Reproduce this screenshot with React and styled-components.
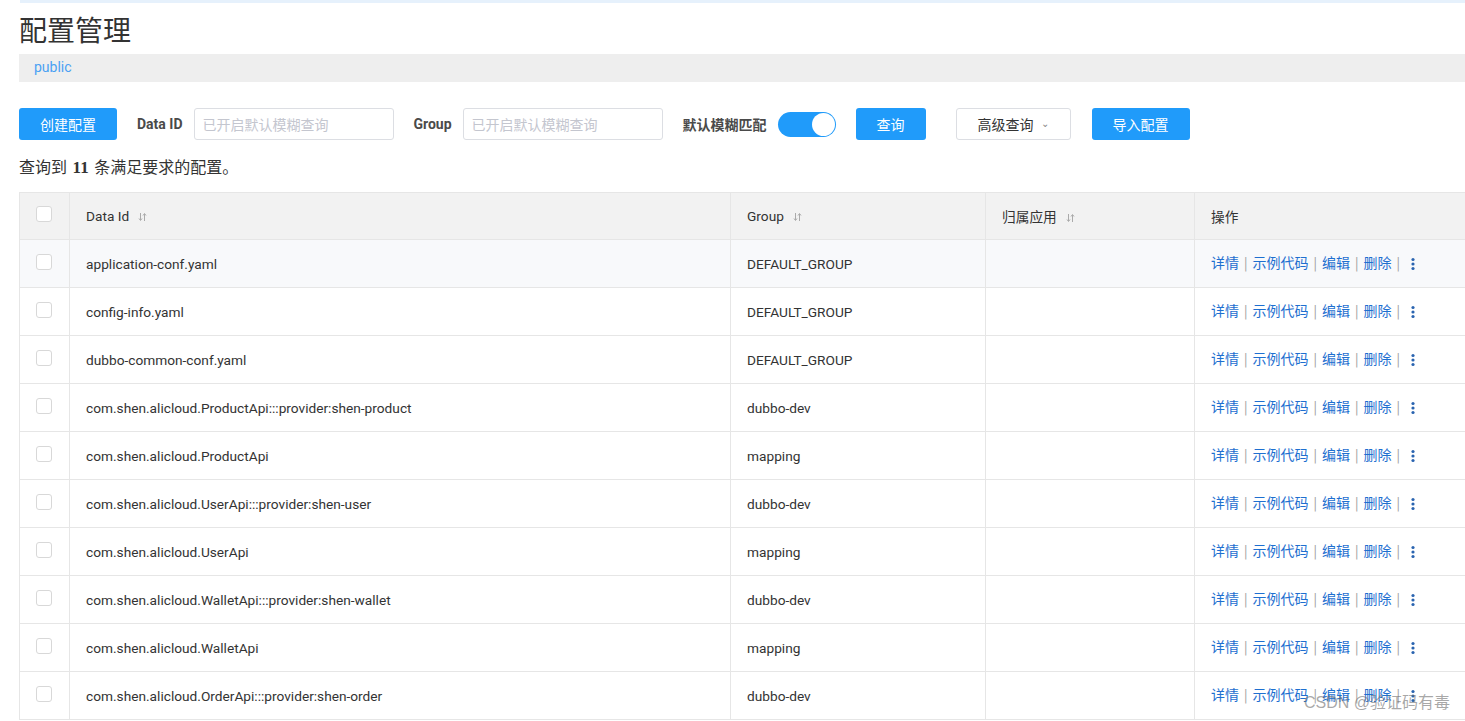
import React from 'react';
import styled, { createGlobalStyle } from 'styled-components';

const GlobalStyle = createGlobalStyle`
  html, body {
    margin: 0;
    padding: 0;
    background: #fff;
    overflow: hidden;
  }
  body {
    font-family: Roboto, "Noto Sans CJK SC", "Liberation Sans", sans-serif;
    color: #333;
  }
`;

const rows = [
  { id: 'application-conf.yaml', group: 'DEFAULT_GROUP', active: true },
  { id: 'config-info.yaml', group: 'DEFAULT_GROUP' },
  { id: 'dubbo-common-conf.yaml', group: 'DEFAULT_GROUP' },
  { id: 'com.shen.alicloud.ProductApi:::provider:shen-product', group: 'dubbo-dev' },
  { id: 'com.shen.alicloud.ProductApi', group: 'mapping' },
  { id: 'com.shen.alicloud.UserApi:::provider:shen-user', group: 'dubbo-dev' },
  { id: 'com.shen.alicloud.UserApi', group: 'mapping' },
  { id: 'com.shen.alicloud.WalletApi:::provider:shen-wallet', group: 'dubbo-dev' },
  { id: 'com.shen.alicloud.WalletApi', group: 'mapping' },
  { id: 'com.shen.alicloud.OrderApi:::provider:shen-order', group: 'dubbo-dev' },
];

const SortIcon = () => (
  <SortSvg width="9" height="10" viewBox="0 0 9 10">
    <path d="M2.5 1v7M1 6.5l1.5 2 1.5-2" stroke="#aaa" strokeWidth="1" fill="none" />
    <path d="M6.5 9V2M5 3.5l1.5-2 1.5 2" stroke="#aaa" strokeWidth="1" fill="none" />
  </SortSvg>
);

const MoreIcon = () => (
  <svg width="4" height="14" viewBox="0 0 4 14">
    <circle cx="2" cy="2.5" r="1.6" fill="#2a64b0" />
    <circle cx="2" cy="7" r="1.6" fill="#2a64b0" />
    <circle cx="2" cy="11.5" r="1.6" fill="#2a64b0" />
  </svg>
);

const App = () => {
  return (
    <Page>
      <GlobalStyle />
      <TopLine />
      <Title>配置管理</Title>
      <NsBar>public</NsBar>
      <Toolbar>
        <PrimaryButton width={98}>创建配置</PrimaryButton>
        <Field>
          <Label>Data ID</Label>
          <Input placeholder="已开启默认模糊查询" />
        </Field>
        <Field>
          <Label>Group</Label>
          <Input placeholder="已开启默认模糊查询" />
        </Field>
        <Field>
          <Label>默认模糊匹配</Label>
          <Toggle>
            <Knob />
          </Toggle>
        </Field>
        <PrimaryButton width={70}>查询</PrimaryButton>
        <GhostButton>
          高级查询 <Caret>⌄</Caret>
        </GhostButton>
        <PrimaryButton width={98} gap={21}>导入配置</PrimaryButton>
      </Toolbar>
      <Summary>
        查询到 <b>11</b> 条满足要求的配置。
      </Summary>
      <Table>
        <thead>
          <tr>
            <Th width={50}><Check /></Th>
            <Th width={661}>Data Id<SortIcon /></Th>
            <Th width={255}>Group<SortIcon /></Th>
            <Th width={209}>归属应用<SortIcon /></Th>
            <Th>操作</Th>
          </tr>
        </thead>
        <tbody>
          {rows.map((r) => (
            <Row key={r.id} active={r.active}>
              <Td><Check /></Td>
              <Td>{r.id}</Td>
              <Td>{r.group}</Td>
              <Td />
              <Td>
                <Actions>
                  <Link>详情</Link><Sep>|</Sep>
                  <Link>示例代码</Link><Sep>|</Sep>
                  <Link>编辑</Link><Sep>|</Sep>
                  <Link>删除</Link><Sep>|</Sep>
                  <MoreWrap><MoreIcon /></MoreWrap>
                </Actions>
              </Td>
            </Row>
          ))}
        </tbody>
      </Table>
      <Watermark>CSDN @验证码有毒</Watermark>
    </Page>
  );
};

export default App;

const Page = styled.div`
  position: relative;
  width: 1465px;
  height: 721px;
  padding-left: 19px;
  box-sizing: border-box;
  overflow: hidden;
`;

const TopLine = styled.div`
  height: 3px;
  margin-left: 1px;
  background: #e6f1fc;
`;

const Title = styled.h1`
  margin: 6px 0 0;
  font-size: 28px;
  line-height: 40px;
  font-weight: 400;
  color: #333;
  font-family: "Noto Sans CJK SC", sans-serif;
`;

const NsBar = styled.div`
  margin-top: 5px;
  height: 28px;
  line-height: 27px;
  padding-left: 15px;
  background: #eee;
  color: #4aa1f3;
  font-size: 14px;
`;

const Toolbar = styled.div`
  display: flex;
  align-items: center;
  gap: 20px;
  margin-top: 26px;
  height: 32px;
`;

const Field = styled.div`
  display: flex;
  align-items: center;
  gap: 11px;
`;

const Label = styled.span`
  font-size: 14px;
  font-weight: 700;
  color: #4a4a4a;
  font-family: Roboto, "Noto Sans CJK SC", sans-serif;
`;

const Input = styled.input`
  width: 200px;
  height: 32px;
  box-sizing: border-box;
  border: 1px solid #dcdee3;
  border-radius: 3px;
  padding: 0 8px;
  font-size: 14px;
  font-family: "Noto Sans CJK SC", sans-serif;
  outline: none;
  &::placeholder {
    color: #c4c6cf;
  }
`;

const Toggle = styled.div`
  display: flex;
  align-items: center;
  justify-content: flex-end;
  width: 58px;
  height: 25px;
  border-radius: 13px;
  background: #209bfa;
  padding: 0 1px;
  box-sizing: border-box;
`;

const Knob = styled.div`
  width: 23px;
  height: 23px;
  border-radius: 50%;
  background: #fff;
`;

const PrimaryButton = styled.button`
  width: ${(p) => p.width}px;
  height: 32px;
  margin-left: ${(p) => (p.gap ? p.gap - 20 : 0)}px;
  border: none;
  border-radius: 3px;
  background: #209bfa;
  color: #fff;
  font-size: 14px;
  font-family: "Noto Sans CJK SC", sans-serif;
  padding: 0;
`;

const GhostButton = styled.button`
  width: 115px;
  height: 32px;
  margin-left: 10px;
  border: 1px solid #dcdee3;
  border-radius: 3px;
  background: #fff;
  color: #333;
  font-size: 14px;
  font-family: "Noto Sans CJK SC", sans-serif;
  padding: 0;
`;

const Caret = styled.span`
  display: inline-block;
  font-size: 10px;
  color: #888;
  margin-left: 4px;
  transform: translateY(-3px);
`;

const Summary = styled.div`
  margin-top: 14px;
  height: 24px;
  line-height: 24px;
  font-size: 16px;
  font-family: "Noto Sans CJK SC", sans-serif;
  color: #333;
  b {
    font-family: "Liberation Serif", serif;
    font-size: 17px;
    padding: 0 2px;
  }
`;

const Table = styled.table`
  margin-top: 14px;
  width: 1470px;
  border-collapse: collapse;
  table-layout: fixed;
  font-size: 13.7px;
`;

const Th = styled.th`
  width: ${(p) => (p.width ? `${p.width}px` : 'auto')};
  height: 47px;
  padding: 0 0 0 16px;
  text-align: left;
  font-weight: 400;
  color: #333;
  background: #f2f2f2;
  border: 1px solid #e6e6e6;
  box-sizing: border-box;
  font-family: Roboto, "Noto Sans CJK SC", sans-serif;
`;

const SortSvg = styled.svg`
  margin-left: 9px;
  vertical-align: middle;
`;

const Row = styled.tr`
  background: ${(p) => (p.active ? '#f8f9fb' : '#fff')};
`;

const Td = styled.td`
  height: 47px;
  padding: 0 0 0 16px;
  border: 1px solid #e6e6e6;
  color: #333;
  white-space: nowrap;
  overflow: hidden;
`;

const Check = styled.span`
  display: inline-block;
  width: 14px;
  height: 14px;
  border: 1px solid #d8d8d8;
  border-radius: 3px;
  background: #fff;
  vertical-align: middle;
  margin-top: -6px;
`;

const Actions = styled.div`
  display: flex;
  align-items: center;
  margin-top: -3px;
  font-family: "Noto Sans CJK SC", sans-serif;
`;

const Link = styled.span`
  color: #1e6fd0;
  font-size: 14px;
`;

const Sep = styled.span`
  color: #999;
  margin: 0 5px;
  font-size: 13px;
`;

const MoreWrap = styled.span`
  display: inline-flex;
  margin-left: 6px;
  margin-top: 3px;
`;

const Watermark = styled.div`
  position: absolute;
  right: 15px;
  bottom: 8px;
  font-size: 16px;
  color: rgba(110, 110, 110, 0.6);
  font-family: "Liberation Sans", "Noto Sans CJK SC", sans-serif;
  pointer-events: none;
`;
